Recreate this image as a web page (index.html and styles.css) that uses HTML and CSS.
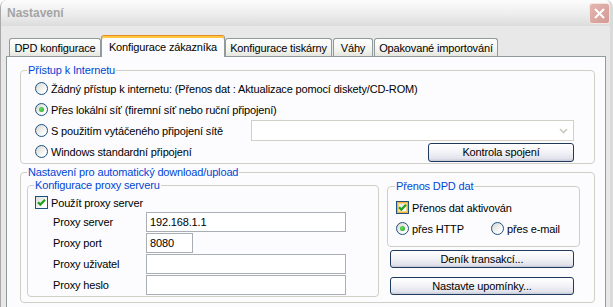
FILE: index.html
```html
<!DOCTYPE html>
<html lang="cs">
<head>
    <meta charset="UTF-8">
    <meta name="viewport" content="width=device-width, initial-scale=1.0">
    <title>Nastavení</title>
    <link rel="stylesheet" href="styles.css">
</head>
<body>
    <div class="window">
        <div class="titlebar">
            <span class="title">Nastavení</span>
            <span class="close">
                <svg width="13" height="13" viewBox="0 0 13 13"><path d="M2 2L11 11M11 2L2 11" stroke="#fff" stroke-width="2"/></svg>
            </span>
        </div>
        <div class="client">
            <div class="tabs">
                <div class="tab tab-dpd">DPD konfigurace</div>
                <div class="tab tab-active">Konfigurace zákazníka</div>
                <div class="tab tab-print">Konfigurace tiskárny</div>
                <div class="tab tab-scale">Váhy</div>
                <div class="tab tab-import">Opakované importování</div>
            </div>
            <div class="panel">
                <fieldset class="group group-net">
                    <legend>Přístup k Internetu</legend>
                    <div class="net-body">
                        <div class="row">
                            <label class="opt"><span class="radio"></span>Žádný přístup k internetu: (Přenos dat : Aktualizace pomocí diskety/CD-ROM)</label>
                        </div>
                        <div class="row">
                            <label class="opt"><span class="radio on"></span>Přes lokální síť (firemní síť nebo ruční připojení)</label>
                        </div>
                        <div class="row">
                            <label class="opt"><span class="radio"></span>S použitím vytáčeného připojení sítě</label>
                            <div class="combo">
                                <span class="combo-arrow">
                                    <svg width="9" height="6" viewBox="0 0 9 6"><path d="M1 1L4.5 4.5L8 1" fill="none" stroke="#c9c9c0" stroke-width="1.6"/></svg>
                                </span>
                            </div>
                        </div>
                        <div class="row">
                            <label class="opt"><span class="radio"></span>Windows standardní připojení</label>
                            <button class="btn btn-check">Kontrola spojení</button>
                        </div>
                    </div>
                </fieldset>
                <fieldset class="group group-auto">
                    <legend>Nastavení pro automatický download/upload</legend>
                    <div class="auto-body">
                        <fieldset class="group group-proxy">
                            <legend>Konfigurace proxy serveru</legend>
                            <div class="proxy-body">
                                <label class="opt check-row"><span class="check"><svg width="11" height="11" viewBox="0 0 11 11"><path d="M2 5.2L4.3 7.6L9 2.8" fill="none" stroke="#21a121" stroke-width="2.2"/></svg></span>Použít proxy server</label>
                                <div class="fields">
                                    <span>Proxy server</span><input class="field" value="192.168.1.1">
                                    <span>Proxy port</span><input class="field field-port" value="8080">
                                    <span>Proxy uživatel</span><input class="field" value="">
                                    <span>Proxy heslo</span><input class="field" value="">
                                </div>
                            </div>
                        </fieldset>
                        <div class="side">
                            <fieldset class="group group-dpd">
                                <legend>Přenos DPD dat</legend>
                                <div class="dpd-body">
                                    <div class="row">
                                        <label class="opt"><span class="check hot"><svg width="11" height="11" viewBox="0 0 11 11"><path d="M2 5.2L4.3 7.6L9 2.8" fill="none" stroke="#21a121" stroke-width="2.2"/></svg></span>Přenos dat aktivován</label>
                                    </div>
                                    <div class="row row-pair">
                                        <label class="opt opt-http"><span class="radio on"></span>přes HTTP</label>
                                        <label class="opt"><span class="radio"></span>přes e-mail</label>
                                    </div>
                                </div>
                            </fieldset>
                            <button class="btn btn-side">Deník transakcí...</button>
                            <button class="btn btn-side btn-remind">Nastavte upomínky...</button>
                        </div>
                    </div>
                </fieldset>
            </div>
        </div>
    </div>
</body>
</html>
```
FILE: styles.css
```css
*{box-sizing: border-box;}
html,body{
    margin: 0;
    height: 100%;
}
body{
    width: 613px;
    height: 307px;
    overflow: hidden;
    background: #ffffff;
    font: 11px "Liberation Sans", Arial, sans-serif;
    letter-spacing: -0.15px;
    color: #000000;
}
.window{
    height: 307px;
    display: flex;
    flex-direction: column;
    background: #e8e8e8;
    border-left: 1px solid #a9a9a9;
    border-right: 3px solid #dadada;
    border-radius: 7px 7px 0 0;
    overflow: hidden;
}
.titlebar{
    flex: none;
    height: 26px;
    display: flex;
    align-items: center;
    justify-content: space-between;
    padding: 0 0 0 6px;
    background: linear-gradient(#fcfcfc, #ededed 55%, #dcdcdc);
}
.title{
    font-weight: bold;
    font-size: 12px;
    letter-spacing: 0;
    color: #a4a4a4;
}
.close{
    width: 21px;
    height: 21px;
    display: flex;
    align-items: center;
    justify-content: center;
    border: 1px solid #f4e4e2;
    border-radius: 3px;
    background: linear-gradient(135deg, #e4b6b1, #d39a94);
}
.client{
    flex: 1;
    display: flex;
    flex-direction: column;
    padding: 9px 4px 0 5px;
}
.tabs{
    flex: none;
    height: 21px;
    display: flex;
    align-items: flex-end;
    padding-left: 3px;
}
.tab{
    height: 18px;
    display: flex;
    align-items: center;
    justify-content: center;
    padding-top: 1px;
    white-space: nowrap;
    border: 1px solid #919b9c;
    border-bottom: none;
    border-radius: 3px 3px 0 0;
    background: linear-gradient(#ffffff, #f2f2ee 70%, #e6e6e0);
}
.tab-dpd{width: 92px;}
.tab-active{
    width: 124px;
    height: 22px;
    margin-bottom: -1px;
    padding-top: 0;
    position: relative;
    z-index: 1;
    border-top: 1px solid #e68b2c;
    box-shadow: inset 0 2px #ffc73c;
    background: #fcfcfe;
}
.tab-print{width: 107px;}
.tab-scale{width: 40px; margin-left: 1px;}
.tab-import{width: 124px; margin-left: 1px;}
.panel{
    flex: 1;
    border: 1px solid #919b9c;
    border-bottom: none;
    background: #fcfcfe;
    padding: 0 10px 0 13px;
}
.group{
    margin: 0;
    padding: 0;
    min-width: 0;
    border: 1px solid #cfcfc6;
    border-radius: 4px;
}
.group legend{
    margin-left: 6px;
    padding: 0 1px;
    line-height: 13px;
    color: #0046d5;
}
.group-net{margin-top: 7px;}
.net-body{padding: 1px 20px 1px 14px;}
.row{
    height: 21px;
    display: flex;
    align-items: center;
    justify-content: space-between;
}
.opt{
    display: flex;
    align-items: center;
    white-space: nowrap;
}
.radio{
    flex: none;
    width: 13px;
    height: 13px;
    margin-right: 3px;
    display: flex;
    align-items: center;
    justify-content: center;
    border: 1px solid #1c5180;
    border-radius: 50%;
    background: linear-gradient(135deg, #d6d6d0, #ffffff 80%);
}
.radio.on::after{
    content: "";
    width: 5px;
    height: 5px;
    border-radius: 50%;
    background: radial-gradient(circle at 40% 40%, #66dd5f, #21a121);
}
.check{
    flex: none;
    width: 13px;
    height: 13px;
    margin-right: 3px;
    display: flex;
    align-items: center;
    justify-content: center;
    border: 1px solid #1c5180;
    background: linear-gradient(135deg, #dcdcd7, #ffffff 80%);
}
.check.hot{
    box-shadow: inset 0 0 0 1px #f8b13a, inset 0 0 0 2px #fcd57d;
}
.combo{
    width: 323px;
    height: 21px;
    display: flex;
    justify-content: flex-end;
    padding: 1px;
    border: 1px solid #d2d0c6;
    background: #ffffff;
}
.combo-arrow{
    width: 17px;
    display: flex;
    align-items: center;
    justify-content: center;
}
.btn{
    padding: 0;
    height: 18px;
    font: inherit;
    letter-spacing: inherit;
    color: #000000;
    border: 1px solid #1f3a5c;
    border-radius: 3px;
    background: linear-gradient(#ffffff, #f4f4f8 45%, #e2e3ec 85%, #c6c9d8);
}
.btn-check{
    width: 146px;
    height: 19px;
    margin-top: 1px;
}
.group-auto{margin-top: 2px;}
.auto-body{
    display: flex;
    gap: 8px;
    padding: 0 14px 5px 6px;
}
.group-proxy{width: 353px;}
.proxy-body{padding: 1px 0 0 7px;}
.check-row{height: 19px;}
.fields{
    display: grid;
    grid-template-columns: 93px 200px;
    grid-auto-rows: 21px;
    align-items: start;
    margin-left: 18px;
}
.fields span{line-height: 20px;}
.field{
    width: 200px;
    height: 20px;
    margin: 0;
    padding: 0 3px;
    font: inherit;
    letter-spacing: inherit;
    color: #000000;
    border: 1px solid #a9aeb4;
    background: #ffffff;
    outline: none;
}
.field-port{width: 47px;}
.side{
    width: 193px;
    display: flex;
    flex-direction: column;
    align-items: flex-start;
}
.group-dpd{
    width: 193px;
    margin-top: 1px;
}
.group-dpd legend{margin-left: 7px;}
.dpd-body{padding: 4px 0 7px 8px;}
.row-pair{justify-content: flex-start;}
.opt-http{width: 95px;}
.btn-side{
    width: 184px;
    margin: 3px 0 0 3px;
}
.btn-remind{margin-top: 9px;}
```
